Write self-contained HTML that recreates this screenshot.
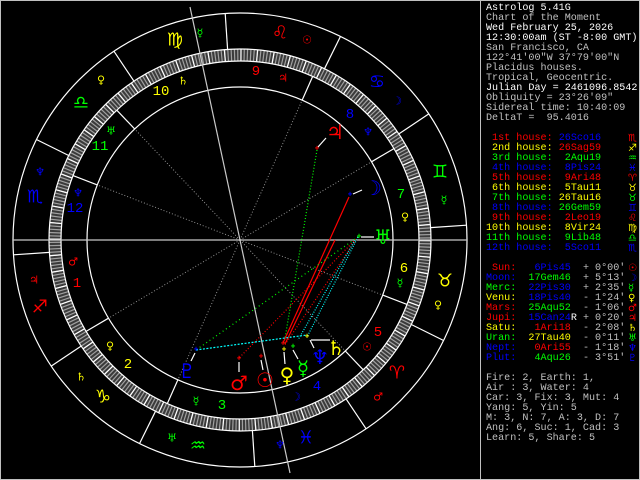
<!DOCTYPE html>
<html><head><meta charset="utf-8"><style>
html,body{margin:0;padding:0;background:#000;width:640px;height:480px;overflow:hidden}
svg{position:absolute;left:0;top:0}
#p{position:absolute;left:486px;top:4px;margin:0;font-family:"Liberation Mono",monospace;font-size:10.1px;line-height:10px;color:#c0c0c0;white-space:pre}
.w{color:#fff}.r{color:#f00}.y{color:#ff0}.g{color:#0f0}.b{color:#00f}
.gl{position:absolute;left:628px;font-family:"DejaVu Sans",sans-serif;font-size:10px;line-height:10px}
</style></head><body>
<svg width="640" height="480" viewBox="0 0 640 480" font-family="DejaVu Sans, sans-serif">
<rect x="0.5" y="0.5" width="639" height="479" fill="none" stroke="#c0c0c0"/>
<line x1="480.5" y1="0" x2="480.5" y2="480" stroke="#c0c0c0"/>
<!-- tick ring -->
<circle cx="240" cy="240" r="185" fill="none" stroke="#3a3a3a" stroke-width="12"/>
<circle cx="240" cy="240" r="185" fill="none" stroke="#a0a0a0" stroke-width="12" stroke-dasharray="1.2 2.029"/>
<circle cx="240" cy="240" r="185" fill="none" stroke="#ffffff" stroke-width="12" stroke-dasharray="1.2 14.945"/>
<g fill="none" stroke="#fff" stroke-width="1.2">
<circle cx="240" cy="240" r="227"/><circle cx="240" cy="240" r="191"/>
<circle cx="240" cy="240" r="179"/><circle cx="240" cy="240" r="153"/>
</g>
<g stroke="#fff" stroke-width="1.2">
<line x1="346.1" y1="398.9" x2="366.1" y2="428.8"/>
<line x1="411.3" y1="324.5" x2="443.6" y2="340.5"/>
<line x1="430.6" y1="227.6" x2="466.5" y2="225.2"/>
<line x1="398.9" y1="133.9" x2="428.8" y2="113.9"/>
<line x1="324.5" y1="68.7" x2="340.5" y2="36.4"/>
<line x1="227.6" y1="49.4" x2="225.2" y2="13.5"/>
<line x1="133.9" y1="81.1" x2="113.9" y2="51.2"/>
<line x1="68.7" y1="155.5" x2="36.4" y2="139.5"/>
<line x1="49.4" y1="252.4" x2="13.5" y2="254.8"/>
<line x1="81.1" y1="346.1" x2="51.2" y2="366.1"/>
<line x1="155.5" y1="411.3" x2="139.5" y2="443.6"/>
<line x1="252.4" y1="430.6" x2="254.8" y2="466.5"/>
<line x1="108.5" y1="318.2" x2="86.1" y2="331.4"/>
<line x1="177.9" y1="379.8" x2="167.3" y2="403.6"/>
<line x1="345.3" y1="351" x2="363.2" y2="369.8"/>
<line x1="382.7" y1="295.1" x2="407" y2="304.4"/>
<line x1="371.5" y1="161.8" x2="393.9" y2="148.6"/>
<line x1="302.1" y1="100.2" x2="312.7" y2="76.4"/>
<line x1="134.7" y1="129" x2="116.8" y2="110.2"/>
<line x1="97.3" y1="184.9" x2="73" y2="175.6"/>
</g>
<g stroke="#909090" stroke-width="1" stroke-dasharray="1 2">
<line x1="240" y1="240" x2="108.5" y2="318.2"/>
<line x1="240" y1="240" x2="177.9" y2="379.8"/>
<line x1="240" y1="240" x2="345.3" y2="351"/>
<line x1="240" y1="240" x2="382.7" y2="295.1"/>
<line x1="240" y1="240" x2="371.5" y2="161.8"/>
<line x1="240" y1="240" x2="302.1" y2="100.2"/>
<line x1="240" y1="240" x2="134.7" y2="129"/>
<line x1="240" y1="240" x2="97.3" y2="184.9"/>
</g>
<g stroke="#c8c8c8" stroke-width="1.2">
<line x1="13" y1="240" x2="467" y2="240"/>
<line x1="190" y1="7" x2="290" y2="473"/>
</g>
<g stroke-width="1.2" fill="none">
<line x1="317" y1="150" x2="284" y2="344" stroke="#0f0" stroke-dasharray="1 2"/>
<line x1="349" y1="197" x2="283" y2="343" stroke="#f00"/>
<line x1="335" y1="240" x2="285" y2="344" stroke="#f00"/>
<line x1="358" y1="237" x2="284" y2="346" stroke="#f00" stroke-dasharray="1 2"/>
<line x1="358" y1="237" x2="239" y2="358" stroke="#f00" stroke-dasharray="1 2"/>
<line x1="358" y1="237" x2="196" y2="350" stroke="#0f0" stroke-dasharray="1 3"/>
<line x1="358" y1="237" x2="307" y2="337" stroke="#0ff" stroke-dasharray="1 1.5"/>
<line x1="355" y1="240" x2="298" y2="340" stroke="#0ff" stroke-dasharray="1 1.5"/>
<line x1="196" y1="350" x2="307" y2="335" stroke="#0ff" stroke-dasharray="2 1.5"/>
</g>
<g stroke="#fff" stroke-width="1.2">
<line x1="353" y1="194" x2="362" y2="190"/>
<line x1="361" y1="237" x2="374" y2="237"/>
<line x1="318" y1="147" x2="326" y2="138"/>
<line x1="239" y1="362" x2="239" y2="372"/>
<line x1="261" y1="360" x2="263" y2="370"/>
<line x1="284" y1="352" x2="285" y2="364"/>
<line x1="293" y1="350" x2="298" y2="359"/>
<line x1="310" y1="340" x2="314" y2="348"/>
<line x1="311" y1="340" x2="330" y2="340"/>
<line x1="195" y1="353" x2="191" y2="361"/>
</g>
<g font-size="8" text-anchor="middle" dominant-baseline="central" font-family="Liberation Mono, monospace" font-weight="bold">
<text x="261" y="357" fill="#f00">+</text><text x="350" y="195" fill="#00f">+</text>
<text x="293" y="347" fill="#0f0">+</text><text x="284" y="350" fill="#ff0">+</text>
<text x="239" y="359" fill="#f00">+</text><text x="317" y="149" fill="#f00">+</text>
<text x="307" y="337" fill="#ff0">+</text><text x="359" y="237" fill="#0f0">+</text>
<text x="283" y="344" fill="#f00">+</text><text x="196" y="350" fill="#00f">+</text>
</g>
<g font-size="20" text-anchor="middle" dominant-baseline="central">
<text x="265" y="380" fill="#f00">☉</text><text x="373" y="188" fill="#00f">☽</text>
<text x="303" y="368" fill="#0f0">☿</text><text x="287" y="375" fill="#ff0">♀</text>
<text x="239" y="383" fill="#f00">♂</text><text x="335" y="132" fill="#f00">♃</text>
<text x="336" y="348" fill="#ff0">♄</text><text x="383" y="237" fill="#0f0">♅</text>
<text x="320" y="357" fill="#00f">♆</text><text x="187" y="371" fill="#00f">♇</text>
</g>
<g font-size="18" text-anchor="middle" dominant-baseline="central">
<text x="175" y="40" fill="#ff0">♍</text><text x="81" y="103" fill="#0f0">♎</text>
<text x="35" y="197" fill="#00f">♏</text><text x="40" y="307" fill="#f00">♐</text>
<text x="103" y="397" fill="#ff0">♑</text><text x="198" y="446" fill="#0f0">♒</text>
<text x="306" y="438" fill="#00f">♓</text><text x="397" y="373" fill="#f00">♈</text>
<text x="445" y="281" fill="#ff0">♉</text><text x="440" y="172" fill="#0f0">♊</text>
<text x="377" y="82" fill="#00f">♋</text><text x="280" y="33" fill="#f00">♌</text>
</g>
<g font-size="11" text-anchor="middle" dominant-baseline="central">
<text x="200" y="33" fill="#0f0">☿</text><text x="101" y="80" fill="#ff0">♀</text>
<text x="183" y="81" fill="#ff0">♄</text><text x="111" y="131" fill="#0f0">♅</text>
<text x="40" y="172" fill="#00f">♆</text><text x="78" y="193" fill="#00f">♆</text>
<text x="73" y="262" fill="#f00">♂</text><text x="34" y="280" fill="#f00">♃</text>
<text x="110" y="346" fill="#ff0">♀</text><text x="81" y="377" fill="#ff0">♄</text>
<text x="196" y="401" fill="#0f0">☿</text><text x="172" y="438" fill="#0f0">♅</text>
<text x="400" y="283" fill="#0f0">☿</text><text x="438" y="305" fill="#ff0">♀</text>
<text x="367" y="347" fill="#f00">☉</text><text x="378" y="397" fill="#f00">♂</text>
<text x="296" y="397" fill="#00f">☽</text><text x="280" y="445" fill="#00f">♆</text>
<text x="307" y="40" fill="#f00">☉</text><text x="283" y="78" fill="#f00">♃</text>
<text x="397" y="101" fill="#00f">☽</text><text x="368" y="132" fill="#00f">♆</text>
<text x="444" y="200" fill="#0f0">☿</text><text x="405" y="217" fill="#ff0">♀</text>
</g>
<g font-size="14" text-anchor="middle" dominant-baseline="central" font-family="Liberation Mono, monospace">
<text x="77" y="284" fill="#f00">1</text><text x="128" y="365" fill="#ff0">2</text>
<text x="222" y="406" fill="#0f0">3</text><text x="317" y="387" fill="#00f">4</text>
<text x="378" y="333" fill="#f00">5</text><text x="404" y="269" fill="#ff0">6</text>
<text x="401" y="195" fill="#0f0">7</text><text x="350" y="115" fill="#00f">8</text>
<text x="256" y="72" fill="#f00">9</text><text x="161" y="92" fill="#ff0">10</text>
<text x="100" y="147" fill="#0f0">11</text><text x="75" y="209" fill="#00f">12</text>
</g>
</svg>
<pre id="p"><span class="w">Astrolog 5.41G</span>
Chart of the Moment
<span class="w">Wed February 25, 2026</span>
<span class="w">12:30:00am (ST -8:00 GMT)</span>
San Francisco, CA
122°41'00"W 37°79'00"N
Placidus houses.
Tropical, Geocentric.
<span class="w">Julian Day = 2461096.8542</span>
Obliquity = 23°26'09"
Sidereal time: 10:40:09
DeltaT =  95.4016

<span class="r"> 1st house:</span> <span class="b">26Sco16</span>
<span class="y"> 2nd house:</span> <span class="r">26Sag59</span>
<span class="g"> 3rd house:</span> <span class="g"> 2Aqu19</span>
<span class="b"> 4th house:</span> <span class="b"> 8Pis24</span>
<span class="r"> 5th house:</span> <span class="r"> 9Ari48</span>
<span class="y"> 6th house:</span> <span class="y"> 5Tau11</span>
<span class="g"> 7th house:</span> <span class="y">26Tau16</span>
<span class="b"> 8th house:</span> <span class="g">26Gem59</span>
<span class="r"> 9th house:</span> <span class="r"> 2Leo19</span>
<span class="y">10th house:</span> <span class="y"> 8Vir24</span>
<span class="g">11th house:</span> <span class="g"> 9Lib48</span>
<span class="b">12th house:</span> <span class="b"> 5Sco11</span>

<span class="r"> Sun:</span>  <span class="b"> 6Pis45</span>  + 0°00'
<span class="b">Moon:</span>  <span class="g">17Gem46</span>  + 5°13'
<span class="g">Merc:</span>  <span class="b">22Pis30</span>  + 2°35'
<span class="y">Venu:</span>  <span class="b">18Pis40</span>  - 1°24'
<span class="r">Mars:</span>  <span class="g">25Aqu52</span>  - 1°06'
<span class="r">Jupi:</span>  <span class="b">15Can24</span><span class="w">R</span> + 0°20'
<span class="y">Satu:</span>  <span class="r"> 1Ari18</span>  - 2°08'
<span class="g">Uran:</span>  <span class="y">27Tau40</span>  - 0°11'
<span class="b">Nept:</span>  <span class="r"> 0Ari55</span>  - 1°18'
<span class="b">Plut:</span>  <span class="g"> 4Aqu26</span>  - 3°51'

Fire: 2, Earth: 1,
Air : 3, Water: 4
Car: 3, Fix: 3, Mut: 4
Yang: 5, Yin: 5
M: 3, N: 7, A: 3, D: 7
Ang: 6, Suc: 1, Cad: 3
Learn: 5, Share: 5</pre>
<div class="gl r" style="top:134px">♏</div>
<div class="gl y" style="top:144px">♐</div>
<div class="gl g" style="top:154px">♒</div>
<div class="gl b" style="top:164px">♓</div>
<div class="gl r" style="top:174px">♈</div>
<div class="gl y" style="top:184px">♉</div>
<div class="gl g" style="top:194px">♉</div>
<div class="gl b" style="top:204px">♊</div>
<div class="gl r" style="top:214px">♌</div>
<div class="gl y" style="top:224px">♍</div>
<div class="gl g" style="top:234px">♎</div>
<div class="gl b" style="top:244px">♏</div>
<div class="gl r" style="top:264px">☉</div>
<div class="gl b" style="top:274px">☽</div>
<div class="gl g" style="top:284px">☿</div>
<div class="gl y" style="top:294px">♀</div>
<div class="gl r" style="top:304px">♂</div>
<div class="gl r" style="top:314px">♃</div>
<div class="gl y" style="top:324px">♄</div>
<div class="gl g" style="top:334px">♅</div>
<div class="gl b" style="top:344px">♆</div>
<div class="gl b" style="top:354px">♇</div>
</body></html>
